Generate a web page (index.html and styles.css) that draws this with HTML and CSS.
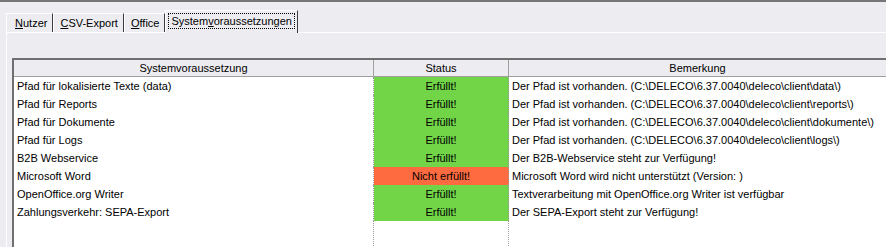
FILE: index.html
```html
<!DOCTYPE html>
<html lang="de">
<head>
    <meta charset="UTF-8">
    <title>Systemvoraussetzungen</title>
    <link rel="stylesheet" href="styles.css">
</head>
<body>
    <div class="topline"></div>

    <div class="tabs">
        <div class="tab"><u>N</u>utzer</div>
        <div class="tab"><u>C</u>SV-Export</div>
        <div class="tab"><u>O</u>ffice</div>
        <div class="tab active"><span class="focus">System<u>v</u>oraussetzungen</span></div>
    </div>

    <div class="panel">
        <div class="grid">
            <div class="head">Systemvoraussetzung</div>
            <div class="head">Status</div>
            <div class="head">Bemerkung</div>

            <div class="cell name">Pfad für lokalisierte Texte (data)</div>
            <div class="cell status ok">Erfüllt!</div>
            <div class="cell note">Der Pfad ist vorhanden. (C:\DELECO\6.37.0040\deleco\client\data\)</div>

            <div class="cell name">Pfad für Reports</div>
            <div class="cell status ok">Erfüllt!</div>
            <div class="cell note">Der Pfad ist vorhanden. (C:\DELECO\6.37.0040\deleco\client\reports\)</div>

            <div class="cell name">Pfad für Dokumente</div>
            <div class="cell status ok">Erfüllt!</div>
            <div class="cell note">Der Pfad ist vorhanden. (C:\DELECO\6.37.0040\deleco\client\dokumente\)</div>

            <div class="cell name">Pfad für Logs</div>
            <div class="cell status ok">Erfüllt!</div>
            <div class="cell note">Der Pfad ist vorhanden. (C:\DELECO\6.37.0040\deleco\client\logs\)</div>

            <div class="cell name">B2B Webservice</div>
            <div class="cell status ok">Erfüllt!</div>
            <div class="cell note">Der B2B-Webservice steht zur Verfügung!</div>

            <div class="cell name">Microsoft Word</div>
            <div class="cell status fail">Nicht erfüllt!</div>
            <div class="cell note">Microsoft Word wird nicht unterstützt (Version: )</div>

            <div class="cell name">OpenOffice.org Writer</div>
            <div class="cell status ok">Erfüllt!</div>
            <div class="cell note">Textverarbeitung mit OpenOffice.org Writer ist verfügbar</div>

            <div class="cell name">Zahlungsverkehr: SEPA-Export</div>
            <div class="cell status ok">Erfüllt!</div>
            <div class="cell note">Der SEPA-Export steht zur Verfügung!</div>

            <!-- empty space below the last row -->
            <div class="cell name filler"></div>
            <div class="cell status filler"></div>
            <div class="cell note filler"></div>
        </div>
    </div>
</body>
</html>
```

FILE: styles.css
```css
html, body {
    margin: 0;
    padding: 0;
    overflow: hidden;
}
body {
    width: 886px;
    height: 247px;
    background-color: #edecf1;
    font-family: "Liberation Sans", Arial, sans-serif;
    font-size: 11px;
    color: #000;
}
u {
    text-decoration: underline;
    text-underline-offset: 1px;
}
.topline {
    height: 2px;
    background-color: #767676;
}

/* Tab strip */
.tabs {
    display: flex;
    align-items: flex-end;
    height: 22px;
    margin-top: 8px;
    padding-left: 6px;
    position: relative;
    z-index: 1;
}
.tab {
    height: 19px;
    line-height: 19px;
    padding: 0 5px 0 8px;
    border-left: 1px solid #fff;
    border-top: 1px solid #fff;
    border-right: 1px solid #3c3c3c;
    box-sizing: border-box;
    white-space: nowrap;
}
.tab + .tab {
    padding-left: 6px;
}
.tab.active {
    height: 23px;
    margin-bottom: -1px;
    padding: 2px 2px 0 2px;
    line-height: 16px;
    background-color: #edecf1;
}
.tab.active .focus {
    display: inline-block;
    padding: 0 2px;
    border: 1px dotted #000;
    line-height: 14px;
}

/* Panel */
.panel {
    margin-left: 6px;
    border-top: 1px solid #fff;
    border-left: 1px solid #fff;
    padding: 25px 0 0 5px;
}

/* Grid */
.grid {
    display: grid;
    grid-template-columns: 360px 135px 378px;
    grid-template-rows: 17px repeat(8, 18px) 27px;
    border-top: 2px solid #6f6f6f;
    border-left: 2px solid #6f6f6f;
    background-color: #fff;
}
.head {
    background-color: #edecf1;
    border-right: 1px solid #a0a0a0;
    border-bottom: 1px solid #a0a0a0;
    text-align: center;
    line-height: 16px;
    white-space: nowrap;
}
.head:last-child {
    border-right: none;
}
.cell {
    line-height: 18px;
    white-space: nowrap;
    overflow: hidden;
}
.name {
    padding-left: 3px;
    border-right: 1px dotted #9a9a9a;
}
.status {
    text-align: center;
    border-right: 1px dotted #9a9a9a;
}
.note {
    padding-left: 3px;
}
.status.ok {
    background-color: #72d548;
}
.status.fail {
    background-color: #ff6b40;
}
```
